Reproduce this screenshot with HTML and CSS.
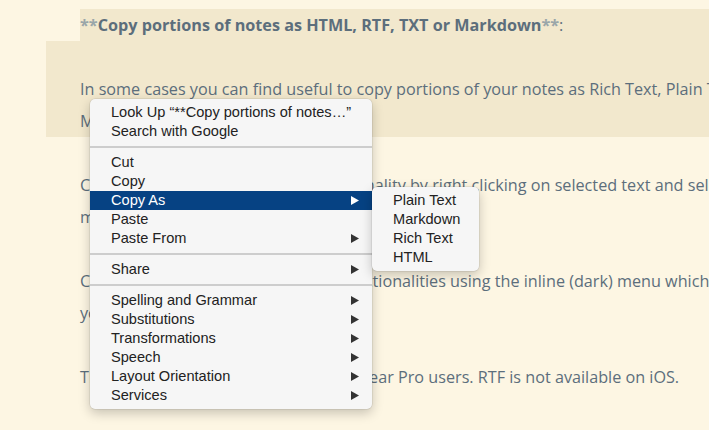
FILE: index.html
```html
<!DOCTYPE html>
<html lang="en">
<head>
  <meta charset="UTF-8" />
  <meta name="viewport" content="width=device-width, initial-scale=1.0"/>
  <title>Note - Copy As</title>
  <link rel="stylesheet" href="styles.css">
</head>
<body>
  <div class="editor">
    <div class="line sel"><span class="md">**</span><b>Copy portions of notes as HTML, RTF, TXT or Markdown</b><span class="md">**</span>:</div>
    <div class="sel-block">
      <div class="line"></div>
      <div class="line">In some cases you can find useful to copy portions of your notes as Rich Text, Plain Text,</div>
      <div class="line">Markdown or HTML.</div>
    </div>
    <div class="line"></div>
    <div class="line">Copy As is made available as a functionality by right clicking on selected text and selecting Copy As from the</div>
    <div class="line">menu.</div>
    <div class="line"></div>
    <div class="line">Copy As is also amongst the other functionalities using the inline (dark) menu which appears when</div>
    <div class="line">you select some text.</div>
    <div class="line"></div>
    <div class="line">This feature is currently available for Bear Pro users. RTF is not available on iOS.</div>
  </div>

  <!-- context menu -->
  <div class="menu">
    <div class="item">Look Up “**Copy portions of notes…”</div>
    <div class="item">Search with Google</div>
    <div class="sep"></div>
    <div class="item">Cut</div>
    <div class="item">Copy</div>
    <div class="item sub active">Copy As<svg class="arrow" viewBox="0 0 8 9"><polygon points="0,0 8,4.5 0,9"/></svg></div>
    <div class="item">Paste</div>
    <div class="item sub">Paste From<svg class="arrow" viewBox="0 0 8 9"><polygon points="0,0 8,4.5 0,9"/></svg></div>
    <div class="sep"></div>
    <div class="item sub">Share<svg class="arrow" viewBox="0 0 8 9"><polygon points="0,0 8,4.5 0,9"/></svg></div>
    <div class="sep"></div>
    <div class="item sub">Spelling and Grammar<svg class="arrow" viewBox="0 0 8 9"><polygon points="0,0 8,4.5 0,9"/></svg></div>
    <div class="item sub">Substitutions<svg class="arrow" viewBox="0 0 8 9"><polygon points="0,0 8,4.5 0,9"/></svg></div>
    <div class="item sub">Transformations<svg class="arrow" viewBox="0 0 8 9"><polygon points="0,0 8,4.5 0,9"/></svg></div>
    <div class="item sub">Speech<svg class="arrow" viewBox="0 0 8 9"><polygon points="0,0 8,4.5 0,9"/></svg></div>
    <div class="item sub">Layout Orientation<svg class="arrow" viewBox="0 0 8 9"><polygon points="0,0 8,4.5 0,9"/></svg></div>
    <div class="item sub">Services<svg class="arrow" viewBox="0 0 8 9"><polygon points="0,0 8,4.5 0,9"/></svg></div>
  </div>

  <div class="menu submenu">
    <div class="item">Plain Text</div>
    <div class="item">Markdown</div>
    <div class="item">Rich Text</div>
    <div class="item">HTML</div>
  </div>
</body>
</html>
```

FILE: styles.css
```css
:root {
  --bg: #fdf6e3;
  --sel: #f2e8cd;
  --text: #5c6e7c;
  --md: #9aa6a9;
  --menu: #f6f6f6;
  --menu-text: #222;
  --active: #064283;
}

body {
  margin: 0;
  padding: 0;
  background: var(--bg);
  overflow: hidden;
  height: 430px;
}

.editor {
  padding: 9px 0 0 80px;
  font-family: 'Open Sans', 'Noto Sans', sans-serif;
  font-size: 16.2px;
  color: var(--text);
}

.line {
  height: 32px;
  line-height: 32px;
  white-space: nowrap;
}

.line b {
  font-weight: 700;
}

.md {
  color: var(--md);
  font-weight: 700;
}

.sel {
  background: var(--sel);
}

.sel-block {
  background: var(--sel);
  margin-left: -34px;
  padding-left: 34px;
}

.menu {
  position: absolute;
  left: 90px;
  top: 99px;
  width: 282px;
  padding: 4px 0;
  box-sizing: border-box;
  background: var(--menu);
  border-radius: 5px;
  box-shadow: 0 0 0 0.5px rgba(0, 0, 0, 0.12), 0 4px 12px rgba(0, 0, 0, 0.22);
  font-family: 'Liberation Sans', Arial, sans-serif;
  font-size: 14.6px;
  color: var(--menu-text);
}

.submenu {
  left: 372px;
  top: 187px;
  width: 107px;
}

.item {
  height: 19px;
  line-height: 19px;
  padding-left: 21px;
  display: flex;
  align-items: center;
  justify-content: space-between;
  padding-right: 13px;
  white-space: nowrap;
}

.item.active {
  background: var(--active);
  color: #fff;
}

.arrow {
  width: 8px;
  height: 9px;
  fill: #333;
}

.item.active .arrow {
  fill: #fff;
}

.sep {
  height: 2px;
  margin: 5px 0;
  background: #cdcdcd;
}
```
